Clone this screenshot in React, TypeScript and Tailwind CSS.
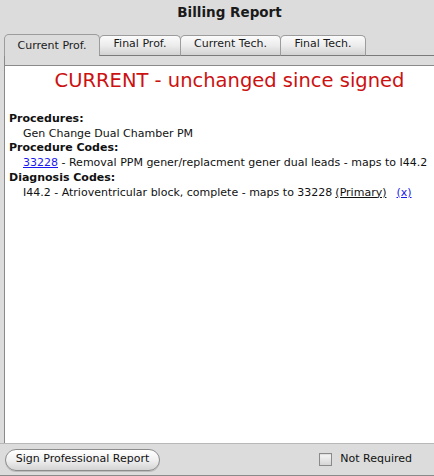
import React from 'react'

const TABS = ['Current Prof.', 'Final Prof.', 'Current Tech.', 'Final Tech.']
const TAB_WIDTHS = ['w-[96px]', 'w-[82px]', 'w-[101px]', 'w-[86px]']

function Tab({ label, width, active }: { label: string; width: string; active: boolean }) {
  if (active) {
    return (
      <div
        className={`${width} h-[22px] flex items-center justify-center border border-b-0 border-[#9c9c9c] rounded-t-[5px] bg-[#dcdcdc] text-[11px] text-[#1a1a1a] pt-[2px]`}
      >
        {label}
      </div>
    )
  }
  return (
    <div
      className={`${width} h-[21px] -ml-px flex items-center justify-center border border-[#9c9c9c] border-b-[#7a7a7a] rounded-t-[5px] bg-gradient-to-b from-[#fbfbfb] via-[#ececec] to-[#d2d2d2] text-[11px] text-[#1a1a1a] pb-[2px]`}
    >
      {label}
    </div>
  )
}

export default function App() {
  return (
    <div className="w-[434px] h-[476px] bg-[#dcdcdc] flex flex-col overflow-hidden font-['DejaVu_Sans',_'Liberation_Sans',_sans-serif] text-[#111]">
      <div className="h-[34px] pt-[4px] pl-[25px] text-center text-[13.5px] leading-[16px] font-bold text-[#1a1a1a]">
        Billing Report
      </div>

      {/* Tabs */}
      <div className="flex items-end pl-[4px]">
        {TABS.map((t, i) => (
          <Tab key={t} label={t} width={TAB_WIDTHS[i]} active={i === 0} />
        ))}
        <div className="flex-1 border-b border-[#7a7a7a]" />
      </div>

      {/* Panel */}
      <div className="flex-1 ml-[4px] flex flex-col border-l border-[#8a8a8a]">
        <div className="h-[10px] border-b border-[#8a8a8a]" />
        <div className="flex-1 bg-white pt-[4px]">
          <div className="pl-[20px] text-center text-[19.5px] leading-[22px] text-[#cc1111] whitespace-nowrap">
            CURRENT - unchanged since signed
          </div>
          <div className="mt-[20px] pl-[4px] text-[11px] leading-[14.7px]">
            <div className="font-bold">Procedures:</div>
            <div className="pl-[14px]">Gen Change Dual Chamber PM</div>
            <div className="font-bold">Procedure Codes:</div>
            <div className="pl-[14px] whitespace-nowrap">
              <span className="text-[#1a1aee] underline">33228</span> - Removal PPM gener/replacment gener dual leads - maps to I44.2
            </div>
            <div className="font-bold">Diagnosis Codes:</div>
            <div className="pl-[14px] whitespace-nowrap flex">
              <span>I44.2 - Atrioventricular block, complete - maps to 33228</span>
              <span className="ml-[3px] underline">(Primary)</span>
              <span className="ml-[10px] text-[#1a1aee] underline">(x)</span>
            </div>
          </div>
        </div>
      </div>

      {/* Bottom bar */}
      <div className="h-[33px] border-t border-[#b8b8b8] flex items-center justify-between pl-[5px] pr-[22px] border-b border-b-[#8a8a8a]">
        <button className="w-[155px] h-[22px] rounded-full border border-[#8c8c8c] bg-gradient-to-b from-[#ffffff] via-[#f0f0f0] to-[#d4d4d4] text-[11px] text-[#111] shadow-[0_1px_0_rgba(0,0,0,0.15)]">
          Sign Professional Report
        </button>
        <label className="flex items-center gap-[8px] text-[11px]">
          <span className="w-[13px] h-[13px] border border-[#8a8a8a] bg-gradient-to-b from-[#f8f8f8] to-[#d6d6d6] shadow-[inset_0_1px_1px_rgba(0,0,0,0.1)]" />
          Not Required
        </label>
      </div>
    </div>
  )
}
